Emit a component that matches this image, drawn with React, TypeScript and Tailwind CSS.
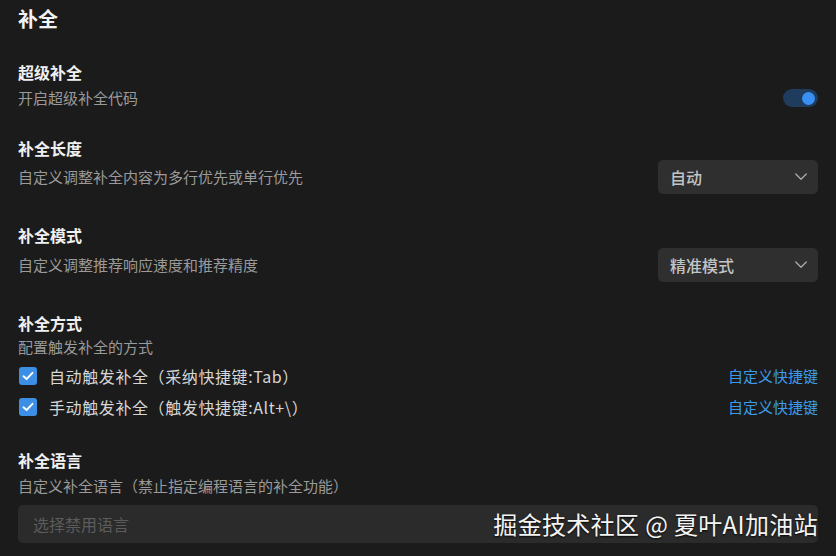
import React from "react";

function Chevron() {
  return (
    <svg width="12" height="8" viewBox="0 0 12 8" fill="none" className="shrink-0">
      <polyline points="0.8,1 6,6.2 11.2,1" stroke="#a8a8a8" strokeWidth="1.4" strokeLinecap="round" strokeLinejoin="round" />
    </svg>
  );
}

function Select({ value }: { value: string }) {
  return (
    <div className="flex h-[34px] w-[160px] items-center justify-between rounded-[5px] bg-[#2f2f2f] pl-[12px] pr-[11px]">
      <span className="text-[16px] font-medium leading-[34px] text-[#c4c4c4]">{value}</span>
      <Chevron />
    </div>
  );
}

function Check() {
  return (
    <div className="flex h-[18px] w-[18px] shrink-0 items-center justify-center rounded-[3px] bg-[#3d8fe6]">
      <svg width="12" height="10" viewBox="0 0 12 10" fill="none">
        <polyline points="1.5,5.2 4.6,8 10.5,1.8" stroke="#ffffff" strokeWidth="1.9" strokeLinecap="round" strokeLinejoin="round" />
      </svg>
    </div>
  );
}

function CheckRow({ label, className }: { label: string; className: string }) {
  return (
    <div className={"flex h-[30px] items-center justify-between " + className}>
      <div className="flex items-center">
        <div className="ml-[1px]">
          <Check />
        </div>
        <span className="ml-[12px] text-[16px] leading-[30px] tracking-[0.6px] text-[#d6d6d6]">{label}</span>
      </div>
      <span className="text-[15px] leading-[30px] text-[#3d9be9]">自定义快捷键</span>
    </div>
  );
}

export default function App() {
  return (
    <div className="relative h-[556px] w-[836px] overflow-hidden bg-[#1b1b1b] px-[18px] font-['Noto_Sans_CJK_SC','Microsoft_YaHei',sans-serif]">
      <div className="mt-[5px] text-[20px] font-bold leading-[28px] text-[#f2f2f2]">补全</div>

      <div className="mt-[28px] text-[16px] font-bold leading-[22px] text-[#f0f0f0]">超级补全</div>
      <div className="mt-[2px] flex h-[26px] items-center justify-between">
        <span className="text-[15px] leading-[26px] text-[#9a9a9a]">开启超级补全代码</span>
        <div className="flex h-[18px] w-[35px] items-center justify-end rounded-full bg-[#1f3b5e] pr-[3px]">
          <div className="h-[13px] w-[13px] rounded-full bg-[#3a8ff2]" />
        </div>
      </div>

      <div className="mt-[26px] text-[16px] font-bold leading-[22px] text-[#f0f0f0]">补全长度</div>
      <div className="mt-[1px] flex h-[34px] items-center justify-between">
        <span className="text-[15px] leading-[26px] text-[#9a9a9a]">自定义调整补全内容为多行优先或单行优先</span>
        <Select value="自动" />
      </div>

      <div className="mt-[30px] text-[16px] font-bold leading-[22px] text-[#f0f0f0]">补全模式</div>
      <div className="mt-[2px] flex h-[34px] items-center justify-between">
        <span className="text-[15px] leading-[26px] text-[#9a9a9a]">自定义调整推荐响应速度和推荐精度</span>
        <Select value="精准模式" />
      </div>

      <div className="mt-[30px] text-[16px] font-bold leading-[22px] text-[#f0f0f0]">补全方式</div>
      <div className="mt-[2px] text-[15px] leading-[22px] text-[#9a9a9a]">配置触发补全的方式</div>
      <CheckRow className="mt-[3px]" label="自动触发补全（采纳快捷键:Tab）" />
      <CheckRow className="mt-[1px]" label="手动触发补全（触发快捷键:Alt+\）" />

      <div className="mt-[27px] text-[16px] font-bold leading-[22px] text-[#f0f0f0]">补全语言</div>
      <div className="mt-[4px] text-[15px] leading-[22px] text-[#9a9a9a]">自定义补全语言（禁止指定编程语言的补全功能）</div>
      <div className="mt-[8px] flex h-[38px] items-center rounded-[5px] bg-[#2b2b2b] pl-[15px]">
        <span className="text-[16px] leading-[38px] text-[#5c5c5c]">选择禁用语言</span>
      </div>

      <div className="absolute right-[18px] top-[508px] text-[24px] leading-[32px] tracking-[0.35px] text-[#f4f4f4] [text-shadow:0_1px_2px_rgba(0,0,0,0.9)]">
        掘金技术社区 @ 夏叶AI加油站
      </div>
    </div>
  );
}
